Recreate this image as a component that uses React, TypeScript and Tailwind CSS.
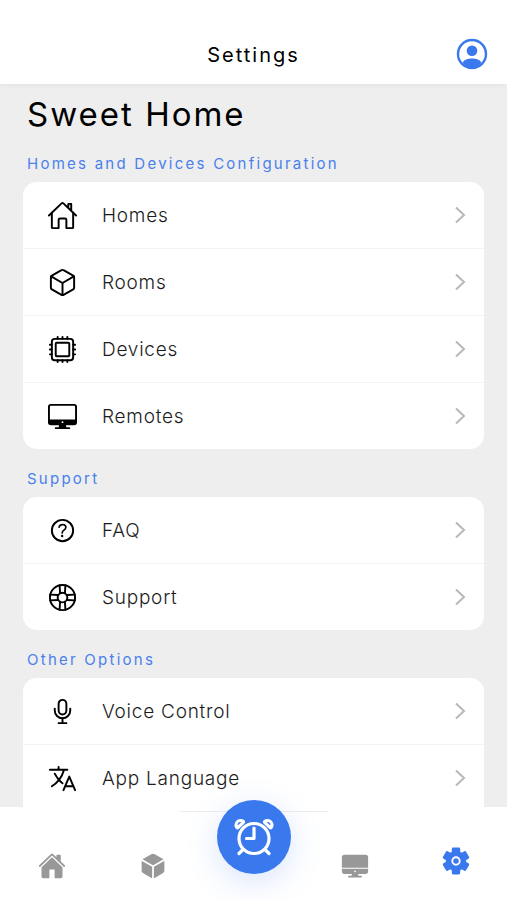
import type { ReactNode } from 'react';
import type { IconType } from 'react-icons';
import {
  IoAlarmOutline,
  IoCube,
  IoCubeOutline,
  IoDesktop,
  IoDesktopOutline,
  IoHardwareChipOutline,
  IoHelpBuoyOutline,
  IoHelpCircleOutline,
  IoHome,
  IoHomeOutline,
  IoLanguageOutline,
  IoMicOutline,
} from 'react-icons/io5';

type Item = { label: string; icon: IconType };

const homeItems: Item[] = [
  { label: 'Homes', icon: IoHomeOutline },
  { label: 'Rooms', icon: IoCubeOutline },
  { label: 'Devices', icon: IoHardwareChipOutline },
  { label: 'Remotes', icon: IoDesktopOutline },
];

const supportItems: Item[] = [
  { label: 'FAQ', icon: IoHelpCircleOutline },
  { label: 'Support', icon: IoHelpBuoyOutline },
];

const otherItems: Item[] = [
  { label: 'Voice Control', icon: IoMicOutline },
  { label: 'App Language', icon: IoLanguageOutline },
];

export default function App() {
  return (
    <div className="flex h-dvh flex-col overflow-hidden bg-[#eeeeee] font-['Inter',sans-serif] text-black">
      <header className="relative z-10 grid h-[84px] shrink-0 grid-cols-[1fr_auto_1fr] items-center bg-white px-[19px] pt-6 shadow-[0_1px_6px_rgba(0,0,0,0.05)]">
        <span />
        <h1 className="pt-0.5 text-xl leading-8 tracking-[2px]">Settings</h1>
        <button aria-label="Account" className="justify-self-end text-[#3a78ee]">
          <AccountIcon />
        </button>
      </header>

      <main className="min-h-0 flex-1 overflow-y-auto px-[23px] pt-2.5 [scrollbar-width:none]">
        <h2 className="px-1 text-[33px] leading-10 tracking-[2px]">Sweet Home</h2>
        <Section title="Homes and Devices Configuration">
          <ItemList items={homeItems} />
        </Section>
        <Section title="Support">
          <ItemList items={supportItems} />
        </Section>
        <Section title="Other Options">
          <ItemList items={otherItems} open />
        </Section>
      </main>

      <nav className="relative grid h-[93px] shrink-0 grid-cols-5 items-center bg-white pt-6 pl-px">
        <span className="absolute top-1 left-1/2 h-px w-[149px] -translate-x-1/2 bg-[#eeeeee]" />
        <NavButton label="Home">
          <IoHome size={28} />
        </NavButton>
        <NavButton label="Rooms">
          <IoCube size={28} />
        </NavButton>
        <div className="relative flex justify-center self-stretch">
          <button
            aria-label="Alarms"
            className="absolute -top-[31px] flex size-[74px] items-center justify-center rounded-full bg-[#3a78ee] text-white shadow-[0_8px_32px_rgba(58,120,238,0.2)]"
          >
            <IoAlarmOutline size={48} className="[&_*]:[stroke-width:34px]" />
          </button>
        </div>
        <NavButton label="Remotes">
          <IoDesktop size={28} />
        </NavButton>
        <NavButton label="Settings" active>
          <GearIcon />
        </NavButton>
      </nav>
    </div>
  );
}

function Section({ title, children }: { title: string; children: ReactNode }) {
  return (
    <section className="pt-5">
      <h3 className="mb-2 px-1 text-[15px] leading-5 tracking-[0.15em] text-[#4a80ec]">
        {title}
      </h3>
      {children}
    </section>
  );
}

function ItemList({ items, open = false }: { items: Item[]; open?: boolean }) {
  return (
    <ul
      className={`divide-y divide-[#f4f4f4] overflow-hidden bg-white ${
        open ? 'rounded-t-[14px] pb-6' : 'rounded-[14px]'
      }`}
    >
      {items.map(({ label, icon: Icon }) => (
        <li key={label}>
          <button className="flex h-[66px] w-full items-center pr-3 pl-6 text-left">
            <Icon size={31} />
            <span className="ml-6 flex-1 pt-0.5 text-[19px] font-light tracking-[0.04em] text-[#1c1c1c]">
              {label}
            </span>
            <ChevronIcon />
          </button>
        </li>
      ))}
    </ul>
  );
}

function NavButton({
  label,
  active = false,
  children,
}: {
  label: string;
  active?: boolean;
  children: ReactNode;
}) {
  return (
    <button
      aria-label={label}
      className={`flex justify-center ${
        active ? 'pb-2.5 text-[#3a78ee]' : 'text-[#989898]'
      }`}
    >
      {children}
    </button>
  );
}

function ChevronIcon() {
  return (
    <svg width="24" height="24" viewBox="0 0 24 24" fill="none" stroke="#b8b8b8" strokeWidth="2">
      <path d="M8 4.5l8 7.5-8 7.5" />
    </svg>
  );
}

function AccountIcon() {
  return (
    <svg width="32" height="32" viewBox="0 0 32 32" fill="currentColor">
      <circle cx="16" cy="16" r="14" fill="none" stroke="currentColor" strokeWidth="2.4" />
      <circle cx="16" cy="12.8" r="5.3" />
      <path d="M6.5 24.5C8 21.8 12 20.4 16 20.4s8 1.4 9.5 4.1A13 13 0 0 1 16 30a13 13 0 0 1-9.5-5.5z" />
    </svg>
  );
}

// six teeth, one every 60 degrees
function GearIcon() {
  return (
    <svg width="28" height="28" viewBox="0 0 28 28" fill="currentColor">
      <circle cx="14" cy="14" r="10.2" />
      {[0, 60, 120].map((angle) => (
        <rect
          key={angle}
          x="9.8"
          y="0.6"
          width="8.4"
          height="26.8"
          rx="1.4"
          transform={`rotate(${angle} 14 14)`}
        />
      ))}
      <circle cx="14" cy="14" r="3.7" fill="none" stroke="white" strokeWidth="1.9" />
    </svg>
  );
}
